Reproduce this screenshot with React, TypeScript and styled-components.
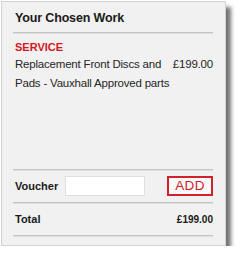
import React from "react";
import styled, { createGlobalStyle } from "styled-components";

const Global = createGlobalStyle`
  html, body { margin: 0; padding: 0; background: #ffffff; }
  body { font-family: "Liberation Sans", Arial, sans-serif; color: #222; }
  * { box-sizing: border-box; }
`;

const Panel = styled.section`
  margin: 1px 0 0 1px;
  width: 225px;
  height: 245px;
  background: #f1f1f1;
  border: 1px solid #d3d3d3;
  box-shadow: 5px 6px 4px rgba(0, 0, 0, 0.55);
  padding: 8px 12px 9px 11px;
  display: flex;
  flex-direction: column;
`;

const Title = styled.h2`
  margin: 0 0 6px;
  padding-left: 2px;
  font-size: 12.5px;
  letter-spacing: -0.15px;
  line-height: 16px;
  font-weight: 700;
  color: #1a1a1a;
`;

const Divider = styled.hr`
  margin: 0;
  border: 0;
  height: 1px;
  background: #c4c4c4;
  box-shadow: 0 1px 0 #e0e0e0;
`;

const Body = styled.div`
  flex: 1;
  padding: 7px 0 0 2px;
`;

const Category = styled.h3`
  margin: 0 0 1px;
  font-size: 11px;
  line-height: 14px;
  font-weight: 700;
  color: #d4171f;
`;

const Item = styled.div`
  display: grid;
  grid-template-columns: 1fr auto;
  font-size: 11.5px;
  letter-spacing: -0.2px;
  line-height: 19px;
  color: #262626;
`;

const Price = styled.span`
  text-align: right;
`;

const VoucherRow = styled.div`
  display: flex;
  align-items: center;
  height: 20px;
  margin: 6px 0;
  padding-left: 2px;
`;

const Label = styled.span`
  font-size: 11px;
  font-weight: 700;
  color: #1a1a1a;
`;

const Input = styled.input`
  margin-left: 7px;
  width: 80px;
  height: 20px;
  border: 1px solid #e0e0e0;
  background: #fff;
  padding: 0 3px;
  font: 11px "Liberation Sans", Arial, sans-serif;
  outline: none;
`;

const AddButton = styled.button`
  margin-left: auto;
  width: 46px;
  height: 20px;
  border: 2px solid #d3202a;
  background: #fafafa;
  color: #d3202a;
  font: 400 13.5px/16px "Liberation Sans", Arial, sans-serif;
  letter-spacing: 0.3px;
  padding: 0;
  cursor: pointer;
`;

const TotalRow = styled.div`
  display: flex;
  align-items: baseline;
  justify-content: space-between;
  padding: 9px 0 8px 2px;
  line-height: 14px;
  font-size: 11px;
  font-weight: 700;
  color: #1a1a1a;
`;

const TotalPrice = styled.span`
  font-size: 10px;
  font-weight: 700;
  color: #1a1a1a;
`;

export default function App() {
  return (
    <>
      <Global />
      <Panel>
        <Title>Your Chosen Work</Title>
        <Divider />
        <Body>
          <Category>SERVICE</Category>
          <Item>
            <span>Replacement Front Discs and Pads - Vauxhall Approved parts</span>
            <Price>£199.00</Price>
          </Item>
        </Body>
        <Divider />
        <VoucherRow>
          <Label>Voucher</Label>
          <Input type="text" aria-label="Voucher code" />
          <AddButton type="button">ADD</AddButton>
        </VoucherRow>
        <Divider />
        <TotalRow>
          <span>Total</span>
          <TotalPrice>£199.00</TotalPrice>
        </TotalRow>
        <Divider />
      </Panel>
    </>
  );
}
